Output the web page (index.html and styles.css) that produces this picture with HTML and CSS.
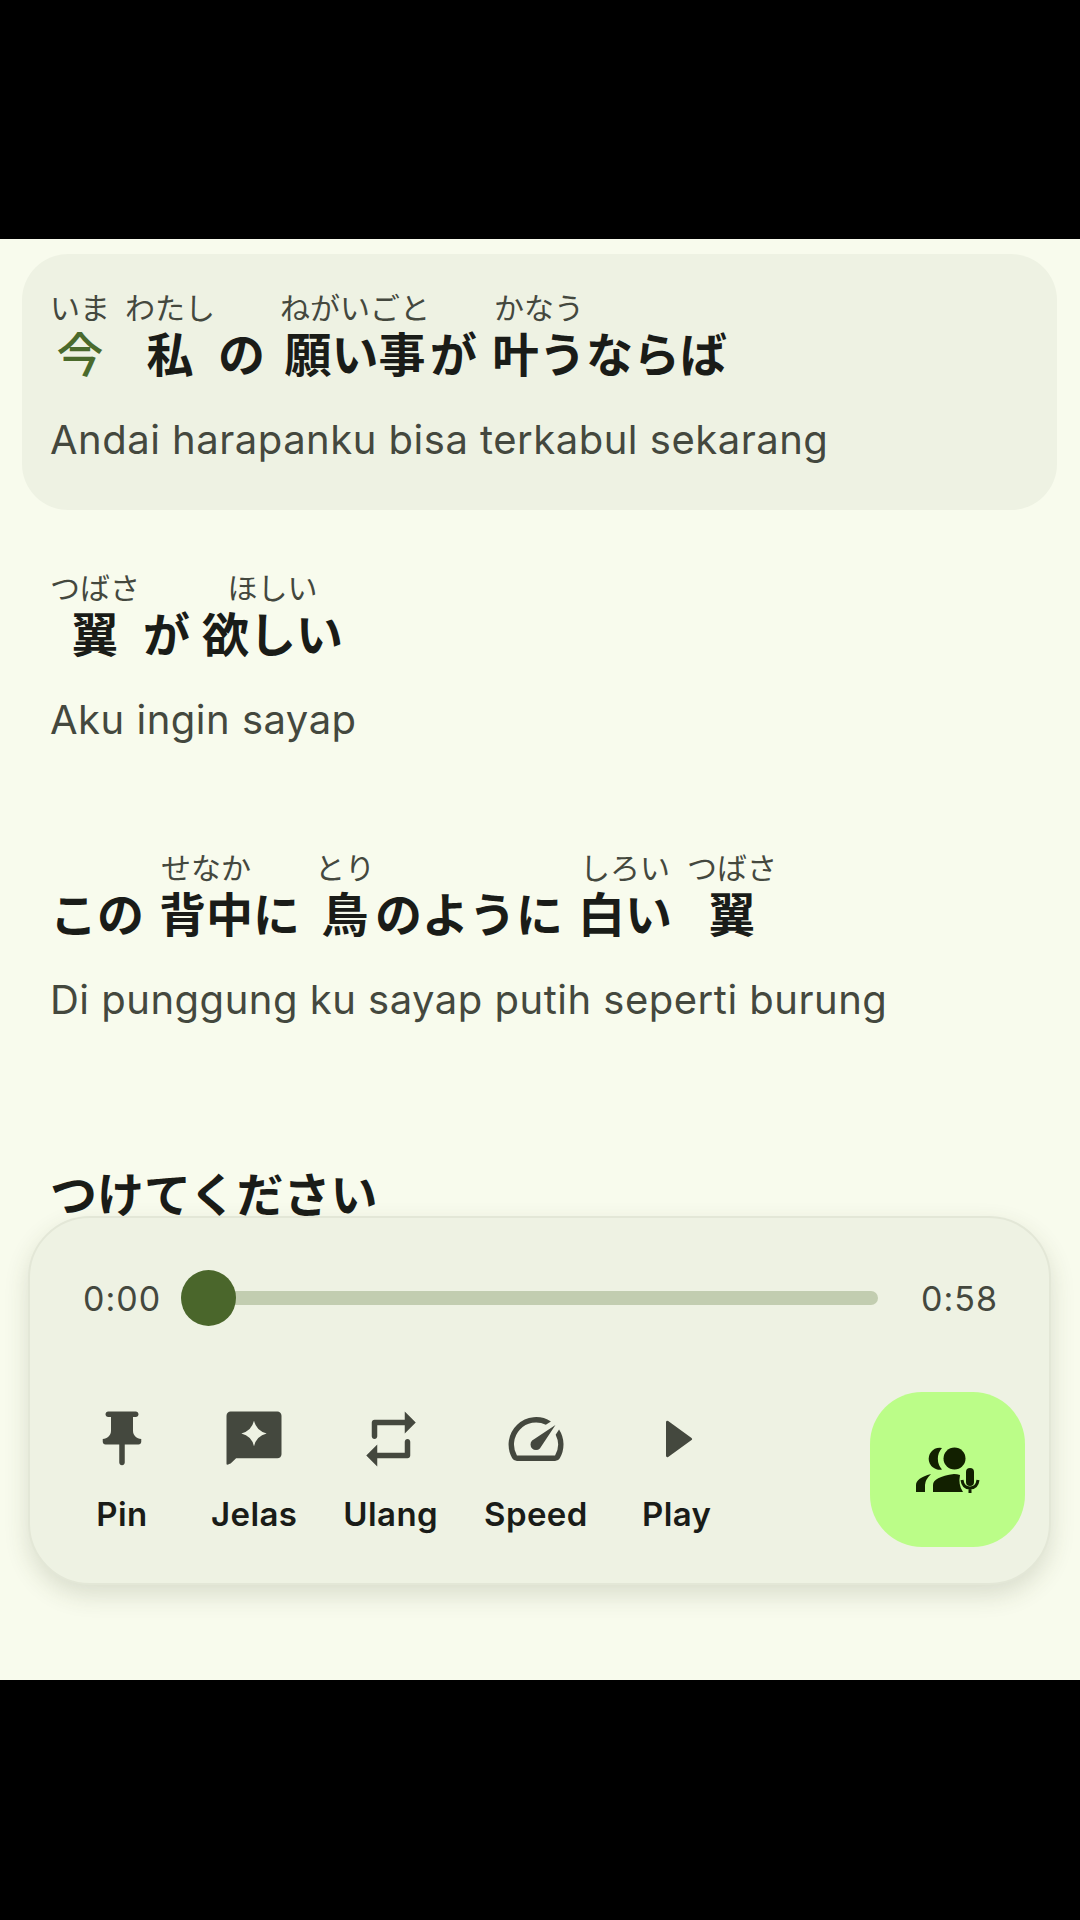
FILE: index.html
```html
<!DOCTYPE html>
<html>
    <head>
        <meta charset="utf-8">
        <title>Lirik</title>
        <link rel="stylesheet" href="styles.css">
    </head>
    <body>
        <div class="screen">
            <div class="lyrics">
                <div class="line active">
                    <div class="jp">
                        <span class="word"><span class="kana">いま</span><span class="now">今</span></span>
                        <span class="word m15"><span class="kana">わたし</span><span>私</span></span>
                        <span class="word m3"><span class="kana"></span><span>の</span></span>
                        <span class="word m15"><span class="kana">ねがいごと</span><span>願い事</span></span>
                        <span class="word"><span class="kana"></span><span>が</span></span>
                        <span class="word m15"><span class="kana">かなう</span><span>叶う</span></span>
                        <span class="word"><span class="kana"></span><span>ならば</span></span>
                    </div>
                    <p class="trans">Andai harapanku bisa terkabul sekarang</p>
                </div>
                <div class="line">
                    <div class="jp">
                        <span class="word"><span class="kana">つばさ</span><span>翼</span></span>
                        <span class="word m3"><span class="kana"></span><span>が</span></span>
                        <span class="word m12"><span class="kana">ほしい</span><span>欲しい</span></span>
                    </div>
                    <p class="trans">Aku ingin sayap</p>
                </div>
                <div class="line">
                    <div class="jp">
                        <span class="word"><span class="kana"></span><span>この</span></span>
                        <span class="word m15"><span class="kana">せなか</span><span>背中</span></span>
                        <span class="word"><span class="kana"></span><span>に</span></span>
                        <span class="word m15"><span class="kana">とり</span><span>鳥</span></span>
                        <span class="word"><span class="kana"></span><span>のように</span></span>
                        <span class="word m15"><span class="kana">しろい</span><span>白い</span></span>
                        <span class="word m15"><span class="kana">つばさ</span><span>翼</span></span>
                    </div>
                    <p class="trans">Di punggung ku sayap putih seperti burung</p>
                </div>
                <div class="line">
                    <div class="jp">
                        <span class="word"><span class="kana"></span><span>つけてください</span></span>
                    </div>
                </div>
            </div>

            <div class="panel">
                <div class="seek">
                    <span class="time">0:00</span>
                    <div class="track"><div class="thumb"></div></div>
                    <span class="time end">0:58</span>
                </div>
                <div class="controls">
                    <div class="tools">
                        <div class="tool">
                            <svg class="icon" viewBox="0 0 24 24"><path d="M16 9V4h1c.55 0 1-.45 1-1s-.45-1-1-1H7c-.55 0-1 .45-1 1s.45 1 1 1h1v5c0 1.66-1.34 3-3 3v1c0 .55.45 1 1 1h5v6.500c0 .55.45 1 1 1s1-.45 1-1V14h5c.55 0 1-.45 1-1v-1c-1.66 0-3-1.34-3-3z"/></svg>
                            <span>Pin</span>
                        </div>
                        <div class="tool">
                            <svg class="icon" viewBox="0 0 24 24"><path fill-rule="evenodd" d="M2 21V3.500C2 2.670 2.670 2 3.500 2h17c.83 0 1.500.67 1.500 1.500v14c0 .83-.67 1.500-1.500 1.500H5.500l-2 1.900C2.900 21.100 2 21.700 2 21zM12 5.400Q12.900 9.100 16.600 10 12.900 10.900 12 14.600 11.100 10.900 7.400 10 11.100 9.100 12 5.400z"/></svg>
                            <span>Jelas</span>
                        </div>
                        <div class="tool">
                            <svg class="icon" viewBox="0 0 24 24"><path d="M7 7h10v3l4-4-4-4v3H6c-.55 0-1 .45-1 1v5c0 .55.45 1 1 1s1-.45 1-1V7zm10 10H7v-3l-4 4 4 4v-3h11c.55 0 1-.45 1-1v-5c0-.55-.45-1-1-1s-1 .45-1 1v4z"/></svg>
                            <span>Ulang</span>
                        </div>
                        <div class="tool">
                            <svg class="icon" viewBox="0 0 24 24"><path d="M20.380 8.570l-1.230 1.850a8 8 0 0 1-.22 7.580H5.070A8 8 0 0 1 15.580 6.850l1.850-1.230A10 10 0 0 0 3.350 19a2 2 0 0 0 1.720 1h13.850a2 2 0 0 0 1.740-1 10 10 0 0 0-.27-10.440zm-9.790 6.840a2 2 0 0 0 2.830 0l5.660-8.490-8.490 5.660a2 2 0 0 0 0 2.830z"/></svg>
                            <span>Speed</span>
                        </div>
                        <div class="tool">
                            <svg class="icon" viewBox="0 0 24 24"><path class="tri" d="M8.500 5.900L17 12 8.500 18.100z"/></svg>
                            <span>Play</span>
                        </div>
                    </div>
                    <button class="mic-btn">
                        <svg class="mic-icon" viewBox="0 0 64 46">
                            <circle cx="38.500" cy="11.500" r="11"/>
                            <path d="M26 1A11 11 0 1 0 26 22.500A16 16 0 0 1 26 1z"/>
                            <path d="M0 45V38Q0 31 15 27Q9 33 9 38V45z"/>
                            <path d="M17 45V38Q17 30 38 27Q41 27 44 28Q42 38 47 45z"/>
                            <rect x="50" y="21" width="8" height="18" rx="4"/>
                            <path class="cradle" d="M46 33Q47 41 54 41Q61 41 62 33M54 41V46"/>
                        </svg>
                    </button>
                </div>
            </div>
        </div>
    </body>
</html>
```

FILE: styles.css
```css
html,body{
    margin: 0; padding: 0;
    background: #000;
}
p{
    margin: 0; padding: 0;
}
body{
    width: 1080px;
    height: 1920px;
    padding-top: 239px;
    box-sizing: border-box;
    font-family: "Inter", "Noto Sans CJK JP", sans-serif;
}
.screen{
    position: relative;
    height: 1441px;
    overflow: hidden;
    background: #f8fbed;
}
.lyrics{
    padding: 15px 23px 0 22px;
}
.line{
    box-sizing: border-box;
    height: 256px;
    margin-bottom: 24px;
    padding: 30px 0 0 28px;
    border-radius: 46px;
}
.line.active{
    background: #eef2e3;
}
.jp{
    display: flex;
    align-items: flex-end;
    height: 96px;
    font-family: "Noto Sans CJK JP", sans-serif;
    font-size: 47px;
    font-weight: 700;
    line-height: 56px;
    color: #1a1c18;
}
.word{
    display: flex;
    flex-direction: column;
    align-items: center;
}
.m3{
    margin-left: 3px;
}
.m12{
    margin-left: 12px;
}
.m15{
    margin-left: 15px;
}
.kana{
    height: 36px;
    font-size: 30px;
    font-weight: 400;
    line-height: 36px;
    color: #44483e;
    white-space: nowrap;
}
.now{
    font-weight: 500;
    color: #4a6a2c;
}
.trans{
    margin-top: 36px;
    font-size: 40px;
    letter-spacing: 0.500px;
    line-height: 48px;
    color: #44483e;
}

.panel{
    position: absolute;
    left: 28px;
    top: 977px;
    box-sizing: border-box;
    width: 1023px;
    height: 369px;
    border: 2px solid #e3e7d7;
    border-radius: 62px;
    background: #eef2e3;
    box-shadow: 0 10px 24px rgba(60, 70, 40, 0.16);
}
.seek{
    display: flex;
    align-items: center;
    height: 56px;
    margin-top: 52px;
    padding: 0 52px 0 53px;
}
.time{
    width: 76px;
    font-size: 34px;
    letter-spacing: 1px;
    color: #44483e;
}
.time.end{
    text-align: right;
}
.track{
    position: relative;
    width: 697px;
    height: 14px;
    margin: 0 43px 0 22px;
    border-radius: 7px;
    background: #c2cdb0;
}
.thumb{
    position: absolute;
    left: 0;
    top: -21px;
    width: 55px;
    height: 56px;
    border-radius: 50%;
    background: #4a662b;
}
.controls{
    display: flex;
    justify-content: space-between;
    align-items: center;
    margin-top: 66px;
    padding: 0 24px 0 49px;
}
.tools{
    display: flex;
    gap: 46px;
}
.tool{
    display: flex;
    flex-direction: column;
    align-items: center;
    min-width: 86px;
    font-size: 33px;
    font-weight: 600;
    letter-spacing: 0.400px;
    line-height: 40px;
    color: #1a1c18;
}
.icon{
    display: block;
    width: 66px;
    height: 66px;
    margin-bottom: 22px;
    fill: #44483e;
}
.tri{
    stroke: #44483e;
    stroke-width: 1;
    stroke-linejoin: round;
}
.mic-btn{
    display: flex;
    justify-content: center;
    align-items: center;
    width: 155px;
    height: 155px;
    padding: 0;
    border: none;
    border-radius: 52px;
    background: #bbfd88;
}
.mic-icon{
    width: 64px;
    height: 46px;
    fill: #122000;
}
.cradle{
    fill: none;
    stroke: #122000;
    stroke-width: 3;
}
```
